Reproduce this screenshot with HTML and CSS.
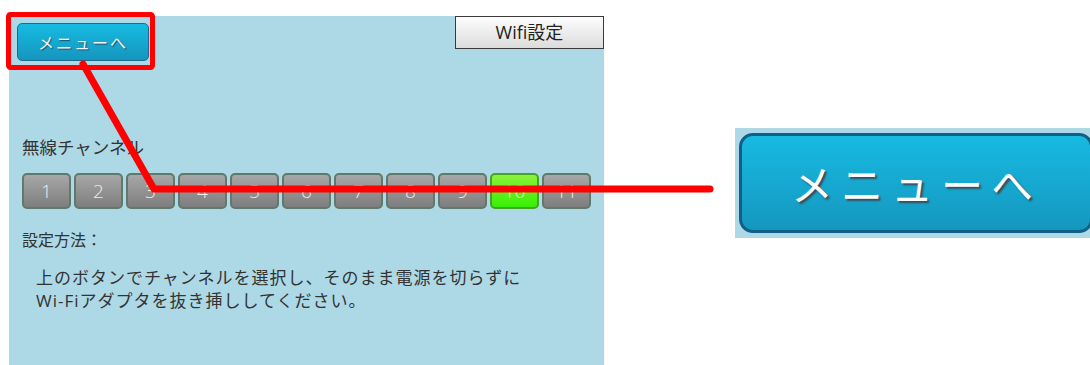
FILE: index.html
```html
<html>
<head>
<meta charset="utf-8">
<title>Wifi設定</title>
<link rel="stylesheet" href="styles.css">
</head>
<body>
<div id="page">
	<div id="panel">
		<div id="topBar">
			<div class="menu_btn">メニューへ</div>
			<div class="wifi_btn">Wifi設定</div>
		</div>
		<div class="label">無線チャンネル</div>
		<div id="channels">
			<div class="ch">1</div>
			<div class="ch">2</div>
			<div class="ch">3</div>
			<div class="ch">4</div>
			<div class="ch">5</div>
			<div class="ch">6</div>
			<div class="ch">7</div>
			<div class="ch">8</div>
			<div class="ch">9</div>
			<div class="ch on">10</div>
			<div class="ch">11</div>
		</div>
		<div class="label small">設定方法：</div>
		<div class="howto">
			上のボタンでチャンネルを選択し、そのまま電源を切らずに<br>
			Wi-Fiアダプタを抜き挿ししてください。
		</div>
	</div>
	<div id="zoom_box">
		<div class="big_btn">メニューへ</div>
	</div>
	<svg id="marks" width="1090" height="365">
		<rect x="8.5" y="14.5" width="144" height="53" rx="2" fill="none" stroke="#ff0000" stroke-width="5"/>
		<polyline points="83,64 154,189 710,189" fill="none" stroke="#ff0000" stroke-width="7" stroke-linecap="round" stroke-linejoin="miter"/>
	</svg>
</div>
</body>
</html>
```

FILE: styles.css
```css
body {
	margin: 0;
	background: #fff;
	font-family: "Open Sans", "Noto Sans CJK JP", sans-serif;
}
#page {
	position: relative;
	width: 1090px;
	height: 365px;
	overflow: hidden;
	display: flex;
	align-items: flex-start;
	padding: 16px 0 0 9px;
	box-sizing: border-box;
}
#panel {
	width: 595px;
	height: 349px;
	flex-shrink: 0;
	background: #add9e6;
	color: #333;
}
#topBar {
	display: flex;
	justify-content: space-between;
	align-items: flex-start;
}
.menu_btn {
	margin: 7px 0 0 8px;
	width: 132px;
	height: 38px;
	box-sizing: border-box;
	border: 1px solid #1b6b8c;
	border-radius: 5px;
	background: linear-gradient(#17bae2, #1596be);
	color: #f4f8fa;
	font-family: "Noto Sans CJK JP", sans-serif;
	font-size: 16px;
	letter-spacing: 2px;
	line-height: 36px;
	text-align: center;
	text-shadow: 1px 1px 1px #2b4b5a;
}
.wifi_btn {
	width: 149px;
	height: 33px;
	box-sizing: border-box;
	border: 1px solid #3a3a3a;
	background: linear-gradient(#fdfdfd, #dcdcdc);
	color: #222;
	font-size: 18px;
	line-height: 30px;
	text-align: center;
}
.label {
	margin: 74px 0 0 13px;
	font-family: "Noto Sans CJK JP", sans-serif;
	font-size: 17.5px;
	line-height: 24px;
}
.label.small {
	margin-top: 19px;
	font-size: 16px;
	line-height: 22px;
}
#channels {
	display: flex;
	gap: 3px;
	margin: 14px 0 0 13px;
}
.ch {
	width: 49px;
	height: 36px;
	box-sizing: border-box;
	border: 2px solid #5f7a6c;
	border-radius: 5px;
	background: linear-gradient(#a7a7a7, #7e7e7e);
	color: #ececec;
	font-size: 19px;
	font-weight: 300;
	line-height: 32px;
	text-align: center;
}
.ch.on {
	border-color: #47a22a;
	background: linear-gradient(#8cf23a, #38ef05);
}
.howto {
	margin: 16px 0 0 27px;
	font-family: "Open Sans", "Noto Sans CJK JP", sans-serif;
	font-size: 17px;
	letter-spacing: 1px;
	line-height: 23px;
}
#zoom_box {
	margin: 112px 0 0 131px;
	width: 355px;
	height: 110px;
	flex-shrink: 0;
	background: #add9e6;
	padding: 5px 0 0 4px;
	box-sizing: border-box;
	overflow: hidden;
}
.big_btn {
	width: 354px;
	height: 100px;
	box-sizing: border-box;
	border: 3px solid #0f5f86;
	border-radius: 14px;
	background: linear-gradient(#17bae2, #1597bf);
	color: #fafcfd;
	font-family: "Noto Sans CJK JP", sans-serif;
	font-size: 42px;
	letter-spacing: 8px;
	line-height: 94px;
	text-align: center;
	text-shadow: 2px 2px 2px #3a4a55;
}
#marks {
	position: absolute;
	left: 0;
	top: 0;
	pointer-events: none;
}
```
